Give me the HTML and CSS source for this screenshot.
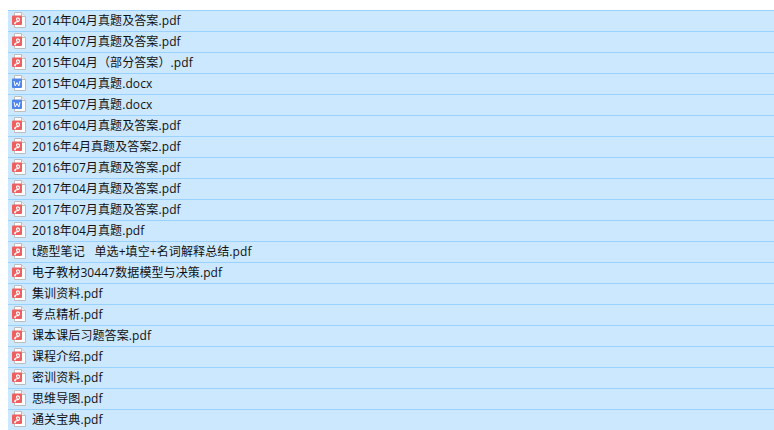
FILE: index.html
```html
<!DOCTYPE html>
<html lang="zh-CN">
<head>
    <meta charset="UTF-8">
    <title>文件列表</title>
    <link rel="stylesheet" href="styles.css">
</head>
<body>
    <svg class="sprites" width="0" height="0">
        <symbol id="icon-pdf" viewBox="0 0 16 16">
            <path d="M3.500 .5H10.500L14.500 4.500V15.500H3.500Z" fill="#fff" stroke="#bdbdbd"/>
            <path d="M10.500 .5V4.500H14.500" fill="#ececec" stroke="#bdbdbd"/>
            <rect x="1" y="3.500" width="10" height="9.500" rx="1" fill="#ee5f5f"/>
            <path d="M4.800 11.300C3.800 12.300 3 11.300 4.300 10.400C5.500 9.600 7.300 9.700 8 9C9 8 8.600 5.800 6.600 5.800C5.300 5.800 5.300 7.500 6.400 9" fill="none" stroke="#fff" stroke-width="1.200"/>
        </symbol>
        <symbol id="icon-doc" viewBox="0 0 16 16">
            <path d="M3.500 .5H10.500L14.500 4.500V15.500H3.500Z" fill="#fff" stroke="#bdbdbd"/>
            <path d="M10.500 .5V4.500H14.500" fill="#ececec" stroke="#bdbdbd"/>
            <rect x="1" y="3.500" width="10" height="9.500" rx="1" fill="#4f86ea"/>
            <path d="M3 6L4.200 11L6 7.500L7.800 11L9 6" fill="none" stroke="#fff" stroke-width="1"/>
        </symbol>
    </svg>

    <ul class="file-list">
        <li class="file-row"><svg class="file-icon"><use href="#icon-pdf"/></svg>2014年04月真题及答案.pdf</li>
        <li class="file-row"><svg class="file-icon"><use href="#icon-pdf"/></svg>2014年07月真题及答案.pdf</li>
        <li class="file-row"><svg class="file-icon"><use href="#icon-pdf"/></svg>2015年04月（部分答案）.pdf</li>
        <li class="file-row"><svg class="file-icon"><use href="#icon-doc"/></svg>2015年04月真题.docx</li>
        <li class="file-row"><svg class="file-icon"><use href="#icon-doc"/></svg>2015年07月真题.docx</li>
        <li class="file-row"><svg class="file-icon"><use href="#icon-pdf"/></svg>2016年04月真题及答案.pdf</li>
        <li class="file-row"><svg class="file-icon"><use href="#icon-pdf"/></svg>2016年4月真题及答案2.pdf</li>
        <li class="file-row"><svg class="file-icon"><use href="#icon-pdf"/></svg>2016年07月真题及答案.pdf</li>
        <li class="file-row"><svg class="file-icon"><use href="#icon-pdf"/></svg>2017年04月真题及答案.pdf</li>
        <li class="file-row"><svg class="file-icon"><use href="#icon-pdf"/></svg>2017年07月真题及答案.pdf</li>
        <li class="file-row"><svg class="file-icon"><use href="#icon-pdf"/></svg>2018年04月真题.pdf</li>
        <li class="file-row"><svg class="file-icon"><use href="#icon-pdf"/></svg>t题型笔记&nbsp;&nbsp;&nbsp;单选+填空+名词解释总结.pdf</li>
        <li class="file-row"><svg class="file-icon"><use href="#icon-pdf"/></svg>电子教材30447数据模型与决策.pdf</li>
        <li class="file-row"><svg class="file-icon"><use href="#icon-pdf"/></svg>集训资料.pdf</li>
        <li class="file-row"><svg class="file-icon"><use href="#icon-pdf"/></svg>考点精析.pdf</li>
        <li class="file-row"><svg class="file-icon"><use href="#icon-pdf"/></svg>课本课后习题答案.pdf</li>
        <li class="file-row"><svg class="file-icon"><use href="#icon-pdf"/></svg>课程介绍.pdf</li>
        <li class="file-row"><svg class="file-icon"><use href="#icon-pdf"/></svg>密训资料.pdf</li>
        <li class="file-row"><svg class="file-icon"><use href="#icon-pdf"/></svg>思维导图.pdf</li>
        <li class="file-row"><svg class="file-icon"><use href="#icon-pdf"/></svg>通关宝典.pdf</li>
    </ul>
</body>
</html>
```

FILE: styles.css
```css
html, body {
    height: 100%;
}

body {
    margin: 0;
    padding-top: 10px;
    box-sizing: border-box;
    overflow: hidden;
    background-color: #fff;
    font-family: "Open Sans", "Noto Sans CJK SC", sans-serif;
    font-size: 12px;
    letter-spacing: 0.1px;
    color: #111;
}

.sprites {
    display: block;
}

.file-list {
    list-style: none;
    margin: 0 0 0 8px;
    padding: 0;
    border-top: 1px solid #99d1ff;
}

.file-row {
    display: flex;
    align-items: center;
    gap: 5px;
    box-sizing: border-box;
    height: 21px;
    padding: 0 0 2px 3px;
    background-color: #cce8ff;
    border-bottom: 1px solid #99d1ff;
    white-space: nowrap;
}

.file-icon {
    width: 16px;
    height: 16px;
    flex-shrink: 0;
}
```
